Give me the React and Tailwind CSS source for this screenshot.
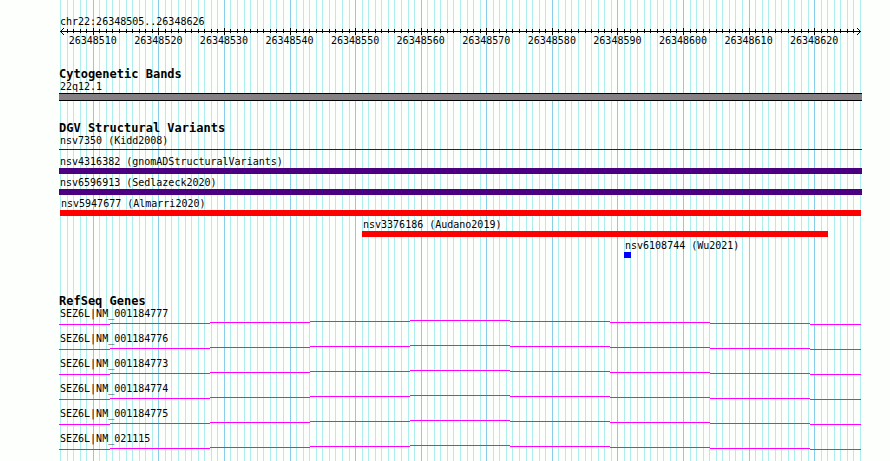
const START = 26348505;
const SPAN = 122;
const TRACK = 803;

const toX = (offset) => 1 + Math.round((offset * 800) / SPAN);
const offsets = Array.from({ length: SPAN + 1 }, (_, i) => i);
const isMajor = (offset) => (START + offset) % 10 === 0;
const percent = (px) => `${(px / TRACK) * 100}%`;

const rulerLabels = Array.from({ length: 12 }, (_, i) => START + 5 + i * 10);

const variants = [
  { name: "nsv7350 (Kidd2008)", from: 0, to: 803, bar: "mt-[2px] mb-[3px] h-px bg-[#4b0082]" },
  { name: "nsv4316382 (gnomADStructuralVariants)", from: 0, to: 803, bar: "h-[6px] bg-[#4b0082]" },
  { name: "nsv6596913 (Sedlazeck2020)", from: 0, to: 803, bar: "h-[6px] bg-[#4b0082]" },
  { name: "nsv5947677 (Almarri2020)", from: 1, to: 802, bar: "h-[6px] bg-[#ff0000]" },
  { name: "nsv3376186 (Audano2019)", from: 303, to: 769, bar: "h-[6px] bg-[#ff0000]" },
  { name: "nsv6108744 (Wu2021)", from: 565, to: 572, bar: "h-[6px] bg-[#0000ff]" },
];

const genes = [
  "SEZ6L|NM_001184777",
  "SEZ6L|NM_001184776",
  "SEZ6L|NM_001184773",
  "SEZ6L|NM_001184774",
  "SEZ6L|NM_001184775",
  "SEZ6L|NM_021115",
];

const intronSteps = [
  [0, 51, 4],
  [51, 151, 3],
  [151, 251, 2],
  [251, 351, 1],
  [351, 451, 0],
  [451, 551, 1],
  [551, 651, 2],
  [651, 751, 3],
  [751, 802, 4],
];

function GridLines() {
  return (
    <svg
      aria-hidden="true"
      className="absolute inset-0 h-full w-full"
      viewBox={`0 0 ${TRACK} 1`}
      preserveAspectRatio="none"
      shapeRendering="crispEdges"
    >
      {offsets.map((o) => (
        <rect key={o} x={toX(o)} y="0" width="1" height="1" fill={isMajor(o) ? "#87ceeb" : "#afeeee"} />
      ))}
    </svg>
  );
}

function Ruler() {
  return (
    <svg
      aria-hidden="true"
      className="block h-[7px] w-full"
      viewBox={`0 0 ${TRACK} 7`}
      preserveAspectRatio="none"
      shapeRendering="crispEdges"
    >
      <rect x="1" y="3" width="801" height="1" />
      {offsets.slice(1, -1).map((o) =>
        isMajor(o) ? (
          <rect key={o} x={toX(o)} y="0" width="1" height="7" />
        ) : (
          <rect key={o} x={toX(o)} y="1" width="1" height="4" />
        )
      )}
      {[1, 2, 3].map((d) => (
        <g key={d}>
          <rect x={1 + d} y={3 - d} width="1" height="1" />
          <rect x={1 + d} y={3 + d} width="1" height="1" />
          <rect x={801 - d} y={3 - d} width="1" height="1" />
          <rect x={801 - d} y={3 + d} width="1" height="1" />
        </g>
      ))}
    </svg>
  );
}

function Heading({ children }) {
  return <h2 className="pt-1 text-[12px] leading-2 font-bold">{children}</h2>;
}

function Label({ children }) {
  return <p className="pt-[2px] pl-px leading-[13px] whitespace-nowrap">{children}</p>;
}

function Introns() {
  return (
    <svg
      aria-hidden="true"
      className="mb-[5px] block h-[5px] w-full"
      viewBox={`0 0 ${TRACK} 5`}
      preserveAspectRatio="none"
      shapeRendering="crispEdges"
    >
      {intronSteps.map(([a, b, y]) => (
        <rect key={a} x={a} y={y} width={b - a} height="1" fill="#ff00ff" />
      ))}
    </svg>
  );
}

export default function App() {
  return (
    <div className="min-h-screen bg-[#fdfffc] pr-[28px] pl-[59px] font-['DejaVu_Sans_Mono',monospace] text-[10px] text-black">
      <main className="relative min-h-screen">
        <GridLines />
        <div className="relative flex flex-col gap-[19px] pt-[13px] pb-[6px]">
          <header>
            <Label>chr22:26348505..26348626</Label>
            <Ruler />
            <div className="flex pr-[2px] pl-px leading-3">
              {rulerLabels.map((n) => (
                <span key={n} className="min-w-0 flex-[10] text-center">
                  {n}
                </span>
              ))}
              <span className="flex-[2]" />
            </div>
          </header>

          <section>
            <Heading>Cytogenetic Bands</Heading>
            <Label>22q12.1</Label>
            <div className="h-[8px] border-y border-black bg-[#848084]" />
          </section>

          <section className="pb-[16px]">
            <Heading>DGV Structural Variants</Heading>
            {variants.map((v) => (
              <div key={v.name} style={{ paddingLeft: percent(v.from) }}>
                <Label>{v.name}</Label>
                <div className={v.bar} style={{ width: `${((v.to - v.from) / (TRACK - v.from)) * 100}%` }} />
              </div>
            ))}
          </section>

          <section>
            <Heading>RefSeq Genes</Heading>
            {genes.map((g) => (
              <div key={g}>
                <Label>{g}</Label>
                <Introns />
              </div>
            ))}
          </section>
        </div>
      </main>
    </div>
  );
}
